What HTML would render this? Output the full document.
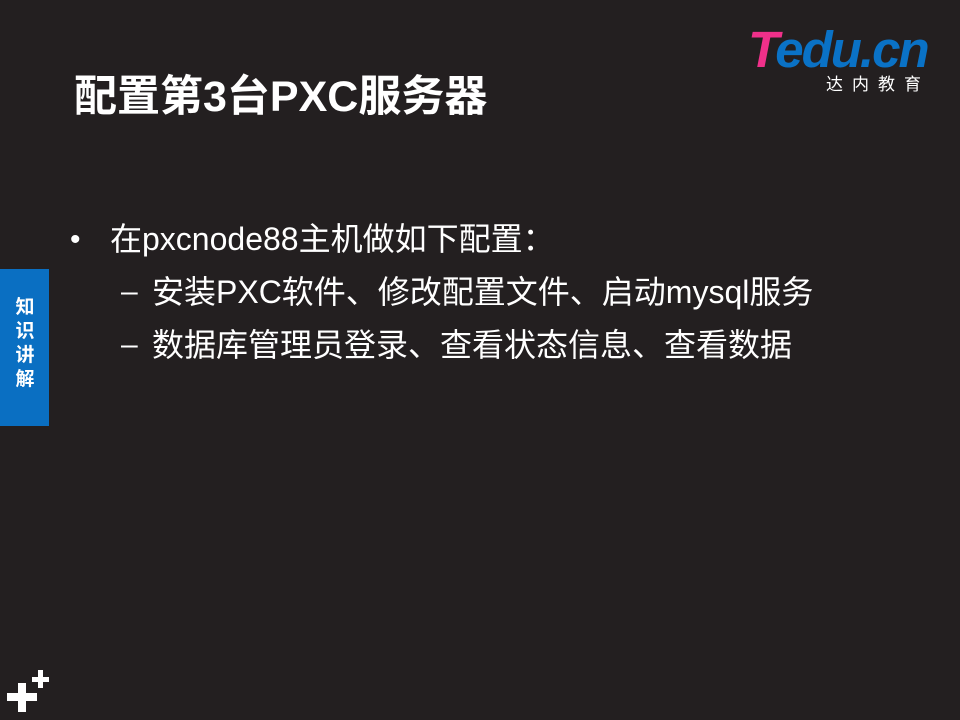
<!DOCTYPE html>
<html><head><meta charset="utf-8"><style>
body{margin:0;width:960px;height:720px;background:#231f20;position:relative;overflow:hidden;font-family:"Liberation Sans","Noto Sans CJK SC",sans-serif;color:#fff}
.a{position:absolute;white-space:nowrap}
</style></head><body>
<div class="a" style="left:748px;top:22px;font-size:51px;font-weight:bold;font-style:italic;letter-spacing:-2px;line-height:56px"><span style="color:#f0308a">T</span><span style="color:#0a72c6">edu.cn</span></div>
<div class="a" style="left:826px;top:74px;font-size:17px;letter-spacing:9px;line-height:22px">达内教育</div>
<div class="a" style="left:74px;top:73px;font-size:43px;font-weight:bold;line-height:48px">配置第3台PXC服务器</div>
<div class="a" style="left:70px;top:221px;font-size:30px;line-height:38px">•</div>
<div class="a" style="left:110px;top:220px;font-size:32px;line-height:38px">在pxcnode88主机做如下配置：</div>
<div class="a" style="left:121px;top:273px;font-size:30px;line-height:38px">–</div>
<div class="a" style="left:152px;top:273px;font-size:32px;line-height:38px">安装PXC软件、修改配置文件、启动mysql服务</div>
<div class="a" style="left:121px;top:326px;font-size:30px;line-height:38px">–</div>
<div class="a" style="left:152px;top:326px;font-size:32px;line-height:38px">数据库管理员登录、查看状态信息、查看数据</div>
<div class="a" style="left:0;top:269px;width:49px;height:157px;background:#0a6fc2"></div>
<div class="a" style="left:13px;top:296px;width:24px;font-size:19px;font-weight:bold;line-height:24px;white-space:normal;text-align:center">知识讲解</div>
<div class="a" style="left:7px;top:693px;width:30px;height:8px;background:#fff"></div>
<div class="a" style="left:18px;top:683px;width:8px;height:29px;background:#fff"></div>
<div class="a" style="left:32px;top:677px;width:17px;height:5px;background:#fff"></div>
<div class="a" style="left:38px;top:670px;width:5px;height:18px;background:#fff"></div>
</body></html>
